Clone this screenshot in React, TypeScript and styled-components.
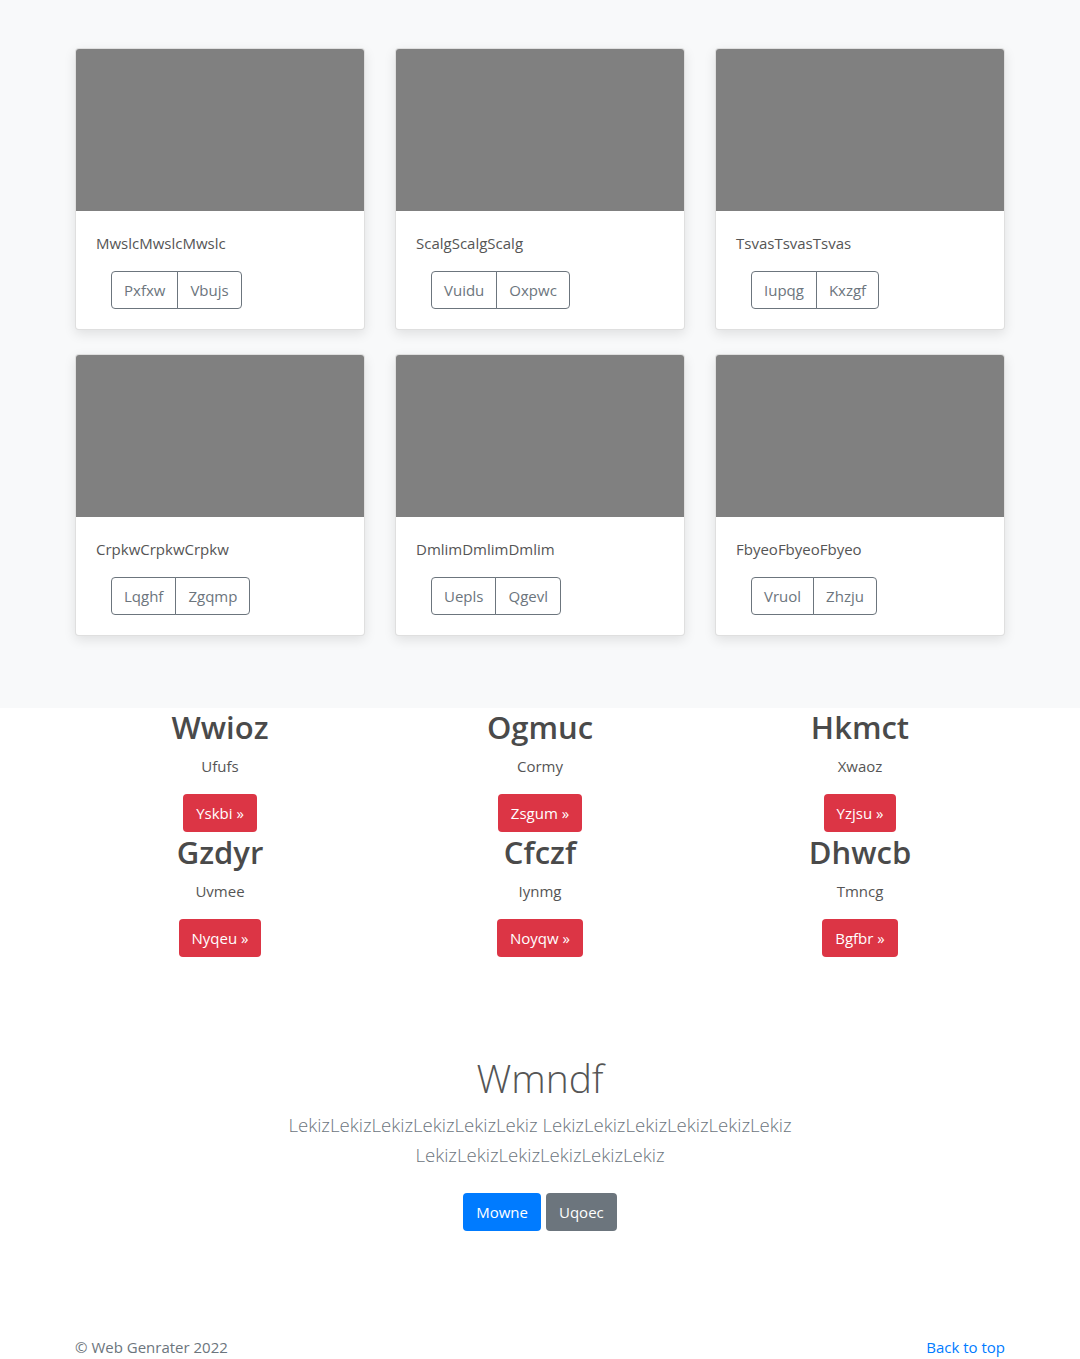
import React from "react";
import styled, { createGlobalStyle } from "styled-components";

const GlobalStyle = createGlobalStyle`
  * { box-sizing: border-box; }
  html, body { margin: 0; padding: 0; }
  body {
    font-family: "Open Sans", "Noto Sans", sans-serif;
    font-size: 16px;
    line-height: 1.5;
    color: #212529;
    background: #fff;
  }
`;

const AlbumSection = styled.section`
  background: #f8f9fa;
  padding: 48px 0 48px;
`;

const Container = styled.div`
  width: 960px;
  margin: 0 auto;
  padding: 0 15px;
`;

const CardGrid = styled.div`
  display: grid;
  grid-template-columns: repeat(3, 1fr);
  column-gap: 30px;
  row-gap: 24px;
  margin-bottom: 24px;
`;

const Card = styled.div`
  background: #fff;
  border: 1px solid rgba(0, 0, 0, 0.125);
  border-radius: 4px;
  overflow: hidden;
  box-shadow: 0 4px 12px rgba(0, 0, 0, 0.1);
`;

const Thumb = styled.div`
  height: 162px;
  background: #808080;
`;

const CardBody = styled.div`
  padding: 20px;
`;

const CardText = styled.p`
  margin: 0 0 16px;
  color: #555;
  font-size: 15px;
  line-height: 24px;
`;

const BtnGroup = styled.div`
  display: inline-flex;
  margin-left: 15px;
`;

const OutlineBtn = styled.button<{ $pos: "first" | "last" }>`
  font-family: inherit;
  font-size: 15px;
  line-height: 1.5;
  height: 38px;
  padding: 0 12px;
  background: transparent;
  color: #6c757d;
  border: 1px solid #6c757d;
  border-radius: ${(p) => (p.$pos === "first" ? "4px 0 0 4px" : "0 4px 4px 0")};
  margin-left: ${(p) => (p.$pos === "last" ? "-1px" : "0")};
`;

const FeatureGrid = styled.div`
  display: grid;
  grid-template-columns: repeat(3, 1fr);
  column-gap: 30px;
`;

const Feature = styled.div`
  display: flex;
  flex-direction: column;
  align-items: center;
  text-align: center;
  padding-bottom: 1px;
`;

const FeatureTitle = styled.h2`
  margin: 0 0 8px;
  font-size: 31px;
  font-weight: 600;
  line-height: 38px;
  color: #4a4a4a;
`;

const FeatureText = styled.p`
  margin: 0 0 16px;
  font-size: 15px;
  line-height: 24px;
  color: #555;
`;

const SolidBtn = styled.button<{ $variant: "danger" | "primary" | "secondary" }>`
  font-family: inherit;
  font-size: 15px;
  height: 38px;
  padding: 0 12px;
  border: 1px solid transparent;
  border-radius: 4px;
  color: #fff;
  background: ${(p) =>
    p.$variant === "danger" ? "#dc3545" : p.$variant === "primary" ? "#007bff" : "#6c757d"};
`;

const Jumbotron = styled.section`
  padding: 96px 0 104px;
  text-align: center;
`;

const JumboTitle = styled.h1`
  margin: 0 0 8px;
  font-size: 39px;
  font-weight: 300;
  line-height: 48px;
  color: #555;
`;

const Lead = styled.p`
  width: 610px;
  margin: 2px auto 23px;
  font-size: 18.6px;
  font-weight: 300;
  line-height: 30px;
  color: #6c757d;
`;

const BtnRow = styled.div`
  display: flex;
  justify-content: center;
  gap: 5px;
`;

const Footer = styled.footer`
  display: flex;
  justify-content: space-between;
  color: #6c757d;
  font-size: 15px;
  line-height: 24px;
`;

const TopLink = styled.a`
  color: #007bff;
  text-decoration: none;
`;

const cards = [
  { text: "MwslcMwslcMwslc", a: "Pxfxw", b: "Vbujs" },
  { text: "ScalgScalgScalg", a: "Vuidu", b: "Oxpwc" },
  { text: "TsvasTsvasTsvas", a: "Iupqg", b: "Kxzgf" },
  { text: "CrpkwCrpkwCrpkw", a: "Lqghf", b: "Zgqmp" },
  { text: "DmlimDmlimDmlim", a: "Uepls", b: "Qgevl" },
  { text: "FbyeoFbyeoFbyeo", a: "Vruol", b: "Zhzju" },
];

const features = [
  { title: "Wwioz", text: "Ufufs", btn: "Yskbi" },
  { title: "Ogmuc", text: "Cormy", btn: "Zsgum" },
  { title: "Hkmct", text: "Xwaoz", btn: "Yzjsu" },
  { title: "Gzdyr", text: "Uvmee", btn: "Nyqeu" },
  { title: "Cfczf", text: "Iynmg", btn: "Noyqw" },
  { title: "Dhwcb", text: "Tmncg", btn: "Bgfbr" },
];

export default function App() {
  return (
    <>
      <GlobalStyle />
      <AlbumSection>
        <Container>
          <CardGrid>
            {cards.map((c) => (
              <Card key={c.text}>
                <Thumb />
                <CardBody>
                  <CardText>{c.text}</CardText>
                  <BtnGroup>
                    <OutlineBtn $pos="first">{c.a}</OutlineBtn>
                    <OutlineBtn $pos="last">{c.b}</OutlineBtn>
                  </BtnGroup>
                </CardBody>
              </Card>
            ))}
          </CardGrid>
        </Container>
      </AlbumSection>
      <Container>
        <FeatureGrid>
          {features.map((f) => (
            <Feature key={f.title}>
              <FeatureTitle>{f.title}</FeatureTitle>
              <FeatureText>{f.text}</FeatureText>
              <SolidBtn $variant="danger">{f.btn} »</SolidBtn>
            </Feature>
          ))}
        </FeatureGrid>
      </Container>
      <Jumbotron>
        <Container>
          <JumboTitle>Wmndf</JumboTitle>
          <Lead>
            LekizLekizLekizLekizLekizLekiz LekizLekizLekizLekizLekizLekiz
            LekizLekizLekizLekizLekizLekiz
          </Lead>
          <BtnRow>
            <SolidBtn $variant="primary">Mowne</SolidBtn>
            <SolidBtn $variant="secondary">Uqoec</SolidBtn>
          </BtnRow>
        </Container>
      </Jumbotron>
      <Container>
        <Footer>
          <span>© Web Genrater 2022</span>
          <TopLink href="#">Back to top</TopLink>
        </Footer>
      </Container>
    </>
  );
}
